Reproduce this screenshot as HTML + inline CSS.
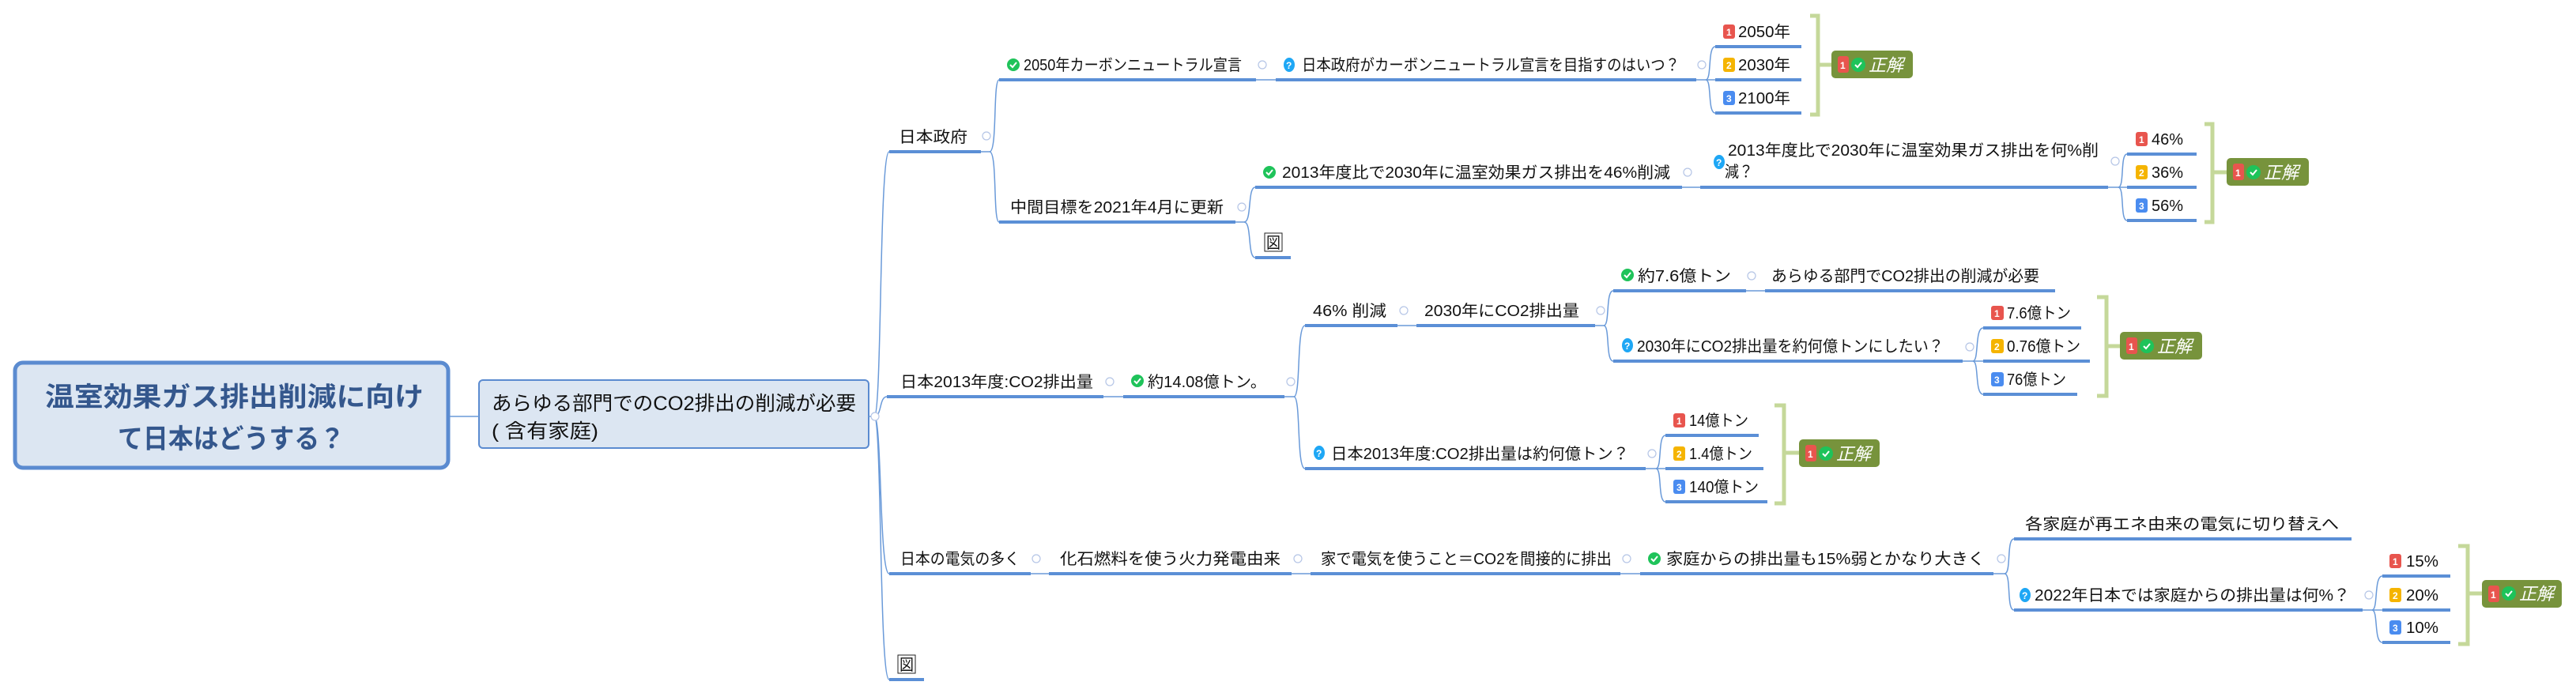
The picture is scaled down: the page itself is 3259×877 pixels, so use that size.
<!DOCTYPE html>
<html><head><meta charset="utf-8"><style>
html,body{margin:0;padding:0;background:#fff;width:3259px;height:877px;overflow:hidden}
svg{display:block}
.t{font-family:"Liberation Sans","Noto Sans CJK JP",sans-serif;font-size:20px;fill:#111}
.b{font-family:"Liberation Sans",sans-serif;font-size:12px;font-weight:bold;fill:#fff}
.u{fill:#5b8fd6}
.l{stroke:#6a9ad9;stroke-width:1.5;fill:none}
.c{fill:#fff;stroke:#b5c5e6;stroke-width:1.2}
.br{stroke:#c5d89a;stroke-width:5;fill:none}
.ok{font-family:"Liberation Sans","Noto Sans CJK JP",sans-serif;font-size:22px;font-style:italic;fill:#fff}
</style></head><body>
<svg width="3259" height="877" viewBox="0 0 3259 877" xmlns="http://www.w3.org/2000/svg">
<!-- root -->
<rect x="19" y="459" width="548" height="133" rx="10" fill="#dce6f2" stroke="#5b8bd0" stroke-width="5"/>
<text x="57" y="514" textLength="479" lengthAdjust="spacingAndGlyphs" style="font-family:'Liberation Sans','Noto Sans CJK JP',sans-serif;font-size:34px;font-weight:bold;fill:#34578d">温室効果ガス排出削減に向け</text>
<text x="149" y="567" textLength="287" lengthAdjust="spacingAndGlyphs" style="font-family:'Liberation Sans','Noto Sans CJK JP',sans-serif;font-size:34px;font-weight:bold;fill:#34578d">て日本はどうする？</text>
<rect x="606" y="481" width="493" height="86" rx="5" fill="#dce6f2" stroke="#5b8bd0" stroke-width="2"/>
<text x="622" y="519" textLength="461" lengthAdjust="spacingAndGlyphs" style="font-family:'Liberation Sans','Noto Sans CJK JP',sans-serif;font-size:25px;fill:#111">あらゆる部門でのCO2排出の削減が必要</text>
<text x="622" y="554" textLength="135" lengthAdjust="spacingAndGlyphs" style="font-family:'Liberation Sans','Noto Sans CJK JP',sans-serif;font-size:25px;fill:#111">( 含有家庭)</text>

<!-- connectors -->
<g class="l">
<path d="M569 527 L606 527"/><path d="M1099 527 L1108 527"/>
<path d="M1106 527 C1116 527,1112 192,1125 192"/>
<path d="M1106 527 C1116 527,1112 502,1122 502"/>
<path d="M1106 527 C1116 527,1112 726,1125 726"/>
<path d="M1106 527 C1116 527,1112 860,1125 860"/>
<path d="M1241 192 L1252 192 C1262 192,1256 101,1264 101"/>
<path d="M1252 192 C1262 192,1256 281,1264 281"/>
<path d="M1589 101 L1614 101"/>
<path d="M2146 101 L2158 101 C2166 101,2160 59,2170 59"/><path d="M2158 101 L2170 101"/><path d="M2158 101 C2166 101,2160 143,2170 143"/>
<path d="M1563 281 L1574 281 C1584 281,1578 237,1588 237"/><path d="M1574 281 C1584 281,1578 326,1588 326"/>
<path d="M2128 237 L2151 237"/>
<path d="M2667 237 L2680 237 C2688 237,2682 195,2691 195"/><path d="M2680 237 L2691 237"/><path d="M2680 237 C2688 237,2682 279,2691 279"/>
<path d="M1396 502 L1421 502"/>
<path d="M1625 502 L1637 502 C1646 502,1640 412,1651 412"/><path d="M1637 502 C1646 502,1640 593,1651 593"/>
<path d="M1768 412 L1792 412"/>
<path d="M2018 412 L2029 412 C2037 412,2031 368,2041 368"/><path d="M2029 412 C2037 412,2031 457,2041 457"/>
<path d="M2209 368 L2233 368"/>
<path d="M2483 457 L2496 457 C2504 457,2498 415,2509 415"/><path d="M2496 457 L2509 457"/><path d="M2496 457 C2504 457,2498 499,2509 499"/>
<path d="M2082 593 L2095 593 C2103 593,2097 551,2107 551"/><path d="M2095 593 L2107 593"/><path d="M2095 593 C2103 593,2097 635,2107 635"/>
<path d="M1304 726 L1327 726"/><path d="M1634 726 L1658 726"/><path d="M2050 726 L2075 726"/>
<path d="M2522 726 L2536 726 C2545 726,2538 682,2548 682"/><path d="M2536 726 C2545 726,2538 772,2548 772"/>
<path d="M2989 772 L3001 772 C3009 772,3003 729,3014 729"/><path d="M3001 772 L3014 772"/><path d="M3001 772 C3009 772,3003 813,3014 813"/>
</g>

<!-- underlines -->
<g class="u">
<rect x="1125" y="190" width="116" height="4"/>
<rect x="1264" y="99" width="325" height="4"/>
<rect x="1614" y="99" width="532" height="4"/>
<rect x="2170" y="57" width="109" height="4"/><rect x="2170" y="99" width="109" height="4"/><rect x="2170" y="141" width="109" height="4"/>
<rect x="1264" y="279" width="299" height="4"/>
<rect x="1588" y="235" width="540" height="4"/>
<rect x="2151" y="235" width="516" height="4"/>
<rect x="2691" y="193" width="88" height="4"/><rect x="2691" y="235" width="88" height="4"/><rect x="2691" y="277" width="88" height="4"/>
<rect x="1588" y="324" width="45" height="4"/>
<rect x="1122" y="500" width="274" height="4"/>
<rect x="1421" y="500" width="204" height="4"/>
<rect x="1651" y="410" width="117" height="4"/>
<rect x="1792" y="410" width="226" height="4"/>
<rect x="2041" y="366" width="168" height="4"/>
<rect x="2233" y="366" width="367" height="4"/>
<rect x="2041" y="455" width="442" height="4"/>
<rect x="2509" y="413" width="124" height="4"/><rect x="2509" y="455" width="135" height="4"/><rect x="2509" y="497" width="119" height="4"/>
<rect x="1651" y="591" width="431" height="4"/>
<rect x="2107" y="549" width="118" height="4"/><rect x="2107" y="591" width="124" height="4"/><rect x="2107" y="633" width="129" height="4"/>
<rect x="1125" y="724" width="179" height="4"/>
<rect x="1327" y="724" width="307" height="4"/>
<rect x="1658" y="724" width="392" height="4"/>
<rect x="2075" y="724" width="447" height="4"/>
<rect x="2548" y="680" width="427" height="4"/>
<rect x="2548" y="770" width="441" height="4"/>
<rect x="3014" y="727" width="86" height="4"/><rect x="3014" y="770" width="86" height="4"/><rect x="3014" y="811" width="86" height="4"/>
<rect x="1125" y="858" width="44" height="4"/>
</g>

<!-- collapse circles -->
<g>
<circle class="c" cx="1107" cy="527" r="5"/><circle class="c" cx="1248" cy="172" r="5"/><circle class="c" cx="1597" cy="82" r="5"/>
<circle class="c" cx="2153" cy="82" r="5"/><circle class="c" cx="1571" cy="262" r="5"/><circle class="c" cx="2135" cy="218" r="5"/>
<circle class="c" cx="2676" cy="204" r="5"/><circle class="c" cx="1404" cy="483" r="5"/><circle class="c" cx="1633" cy="483" r="5"/>
<circle class="c" cx="1776" cy="393" r="5"/><circle class="c" cx="2025" cy="393" r="5"/><circle class="c" cx="2216" cy="349" r="5"/>
<circle class="c" cx="2492" cy="439" r="5"/><circle class="c" cx="2090" cy="574" r="5"/><circle class="c" cx="1311" cy="707" r="5"/>
<circle class="c" cx="1642" cy="707" r="5"/><circle class="c" cx="2058" cy="707" r="5"/><circle class="c" cx="2532" cy="707" r="5"/>
<circle class="c" cx="2997" cy="753" r="5"/>
</g>

<!-- check icons -->
<g>
<circle cx="1282" cy="82" r="8" fill="#1fc35a"/><path d="M1278 82 l3 3 l5 -6" stroke="#fff" stroke-width="2" fill="none"/>
<circle cx="1606" cy="218" r="8" fill="#1fc35a"/><path d="M1602 218 l3 3 l5 -6" stroke="#fff" stroke-width="2" fill="none"/>
<circle cx="1439" cy="482" r="8" fill="#1fc35a"/><path d="M1435 482 l3 3 l5 -6" stroke="#fff" stroke-width="2" fill="none"/>
<circle cx="2059" cy="348" r="8" fill="#1fc35a"/><path d="M2055 348 l3 3 l5 -6" stroke="#fff" stroke-width="2" fill="none"/>
<circle cx="2093" cy="707" r="8" fill="#1fc35a"/><path d="M2089 707 l3 3 l5 -6" stroke="#fff" stroke-width="2" fill="none"/>
</g>
<!-- question icons -->
<g>
<ellipse cx="1631" cy="82" rx="7" ry="9" fill="#1ea7f5"/><text class="b" x="1627" y="87">?</text>
<ellipse cx="2175" cy="205" rx="7" ry="9" fill="#1ea7f5"/><text class="b" x="2171" y="210">?</text>
<ellipse cx="2059" cy="437" rx="7" ry="9" fill="#1ea7f5"/><text class="b" x="2055" y="442">?</text>
<ellipse cx="1669" cy="573" rx="7" ry="9" fill="#1ea7f5"/><text class="b" x="1665" y="578">?</text>
<ellipse cx="2562" cy="753" rx="7" ry="9" fill="#1ea7f5"/><text class="b" x="2558" y="758">?</text>
</g>

<!-- badges -->
<g>
<rect x="2180" y="31" width="15" height="18" rx="3" fill="#e8554e"/><text class="b" x="2184" y="45">1</text>
<rect x="2180" y="73" width="15" height="18" rx="3" fill="#f5b400"/><text class="b" x="2184" y="87">2</text>
<rect x="2180" y="115" width="15" height="18" rx="3" fill="#4a8cf0"/><text class="b" x="2184" y="129">3</text>
<rect x="2702" y="167" width="15" height="18" rx="3" fill="#e8554e"/><text class="b" x="2706" y="181">1</text>
<rect x="2702" y="209" width="15" height="18" rx="3" fill="#f5b400"/><text class="b" x="2706" y="223">2</text>
<rect x="2702" y="251" width="15" height="18" rx="3" fill="#4a8cf0"/><text class="b" x="2706" y="265">3</text>
<rect x="2519" y="387" width="16" height="18" rx="3" fill="#e8554e"/><text class="b" x="2523" y="401">1</text>
<rect x="2519" y="429" width="16" height="18" rx="3" fill="#f5b400"/><text class="b" x="2523" y="443">2</text>
<rect x="2519" y="471" width="16" height="18" rx="3" fill="#4a8cf0"/><text class="b" x="2523" y="485">3</text>
<rect x="2117" y="523" width="15" height="18" rx="3" fill="#e8554e"/><text class="b" x="2121" y="537">1</text>
<rect x="2117" y="565" width="15" height="18" rx="3" fill="#f5b400"/><text class="b" x="2121" y="579">2</text>
<rect x="2117" y="607" width="15" height="18" rx="3" fill="#4a8cf0"/><text class="b" x="2121" y="621">3</text>
<rect x="3023" y="701" width="15" height="18" rx="3" fill="#e8554e"/><text class="b" x="3027" y="715">1</text>
<rect x="3023" y="744" width="15" height="18" rx="3" fill="#f5b400"/><text class="b" x="3027" y="758">2</text>
<rect x="3023" y="785" width="15" height="18" rx="3" fill="#4a8cf0"/><text class="b" x="3027" y="799">3</text>
</g>

<!-- brackets + 正解 -->
<g>
<path class="br" d="M2290 20 L2300 20 L2300 145 L2290 145 M2300 82 L2317 82"/>
<rect x="2317" y="64" width="103" height="35" rx="5" fill="#77933c"/>
<rect x="2325" y="71" width="14" height="21" rx="3" fill="#e8554e"/><text class="b" x="2328" y="87">1</text>
<circle cx="2351" cy="82" r="9" fill="#1ec35a"/><path d="M2347 82 l3 3 l5 -6" stroke="#fff" stroke-width="2" fill="none"/>
<text class="ok" x="2364" y="90">正解</text>

<path class="br" d="M2789 157 L2799 157 L2799 281 L2789 281 M2799 218 L2817 218"/>
<rect x="2817" y="200" width="104" height="35" rx="5" fill="#77933c"/>
<rect x="2825" y="207" width="14" height="21" rx="3" fill="#e8554e"/><text class="b" x="2828" y="223">1</text>
<circle cx="2851" cy="218" r="9" fill="#1ec35a"/><path d="M2847 218 l3 3 l5 -6" stroke="#fff" stroke-width="2" fill="none"/>
<text class="ok" x="2864" y="226">正解</text>

<path class="br" d="M2653 376 L2665 376 L2665 501 L2653 501 M2665 438 L2682 438"/>
<rect x="2682" y="420" width="104" height="35" rx="5" fill="#77933c"/>
<rect x="2690" y="427" width="14" height="21" rx="3" fill="#e8554e"/><text class="b" x="2693" y="443">1</text>
<circle cx="2716" cy="438" r="9" fill="#1ec35a"/><path d="M2712 438 l3 3 l5 -6" stroke="#fff" stroke-width="2" fill="none"/>
<text class="ok" x="2729" y="446">正解</text>

<path class="br" d="M2245 513 L2257 513 L2257 637 L2245 637 M2257 573 L2276 573"/>
<rect x="2276" y="556" width="102" height="35" rx="5" fill="#77933c"/>
<rect x="2284" y="563" width="14" height="21" rx="3" fill="#e8554e"/><text class="b" x="2287" y="579">1</text>
<circle cx="2310" cy="574" r="9" fill="#1ec35a"/><path d="M2306 574 l3 3 l5 -6" stroke="#fff" stroke-width="2" fill="none"/>
<text class="ok" x="2323" y="582">正解</text>

<path class="br" d="M3110 691 L3122 691 L3122 815 L3110 815 M3122 751 L3140 751"/>
<rect x="3140" y="734" width="101" height="35" rx="5" fill="#77933c"/>
<rect x="3148" y="741" width="14" height="21" rx="3" fill="#e8554e"/><text class="b" x="3151" y="757">1</text>
<circle cx="3174" cy="751" r="9" fill="#1ec35a"/><path d="M3170 751 l3 3 l5 -6" stroke="#fff" stroke-width="2" fill="none"/>
<text class="ok" x="3187" y="759">正解</text>
</g>

<!-- texts -->
<g class="t">
<text x="1137" y="180" textLength="87" lengthAdjust="spacingAndGlyphs">日本政府</text>
<text x="1295" y="89" textLength="276" lengthAdjust="spacingAndGlyphs">2050年カーボンニュートラル宣言</text>
<text x="1647" y="89" textLength="478" lengthAdjust="spacingAndGlyphs">日本政府がカーボンニュートラル宣言を目指すのはいつ？</text>
<text x="2199" y="47" textLength="66" lengthAdjust="spacingAndGlyphs">2050年</text>
<text x="2199" y="89" textLength="66" lengthAdjust="spacingAndGlyphs">2030年</text>
<text x="2199" y="131" textLength="66" lengthAdjust="spacingAndGlyphs">2100年</text>
<text x="1278" y="269" textLength="270" lengthAdjust="spacingAndGlyphs">中間目標を2021年4月に更新</text>
<text x="1622" y="225" textLength="491" lengthAdjust="spacingAndGlyphs">2013年度比で2030年に温室効果ガス排出を46%削減</text>
<text x="2186" y="197" textLength="469" lengthAdjust="spacingAndGlyphs">2013年度比で2030年に温室効果ガス排出を何%削</text>
<text x="2182" y="224" textLength="36" lengthAdjust="spacingAndGlyphs">減？</text>
<text x="2722" y="183" textLength="40" lengthAdjust="spacingAndGlyphs">46%</text>
<text x="2722" y="225" textLength="40" lengthAdjust="spacingAndGlyphs">36%</text>
<text x="2722" y="267" textLength="40" lengthAdjust="spacingAndGlyphs">56%</text>
<text x="1602" y="314" textLength="18" lengthAdjust="spacingAndGlyphs">図</text>
<text x="1139" y="490" textLength="244" lengthAdjust="spacingAndGlyphs">日本2013年度:CO2排出量</text>
<text x="1452" y="490" textLength="150" lengthAdjust="spacingAndGlyphs">約14.08億トン。</text>
<text x="1661" y="400" textLength="93" lengthAdjust="spacingAndGlyphs">46% 削減</text>
<text x="1802" y="400" textLength="196" lengthAdjust="spacingAndGlyphs">2030年にCO2排出量</text>
<text x="2072" y="356" textLength="118" lengthAdjust="spacingAndGlyphs">約7.6億トン</text>
<text x="2241" y="356" textLength="339" lengthAdjust="spacingAndGlyphs">あらゆる部門でCO2排出の削減が必要</text>
<text x="2071" y="445" textLength="388" lengthAdjust="spacingAndGlyphs">2030年にCO2排出量を約何億トンにしたい？</text>
<text x="2539" y="403" textLength="81" lengthAdjust="spacingAndGlyphs">7.6億トン</text>
<text x="2539" y="445" textLength="93" lengthAdjust="spacingAndGlyphs">0.76億トン</text>
<text x="2539" y="487" textLength="75" lengthAdjust="spacingAndGlyphs">76億トン</text>
<text x="1684" y="581" textLength="377" lengthAdjust="spacingAndGlyphs">日本2013年度:CO2排出量は約何億トン？</text>
<text x="2137" y="539" textLength="75" lengthAdjust="spacingAndGlyphs">14億トン</text>
<text x="2137" y="581" textLength="80" lengthAdjust="spacingAndGlyphs">1.4億トン</text>
<text x="2137" y="623" textLength="88" lengthAdjust="spacingAndGlyphs">140億トン</text>
<text x="1139" y="714" textLength="151" lengthAdjust="spacingAndGlyphs">日本の電気の多く</text>
<text x="1341" y="714" textLength="279" lengthAdjust="spacingAndGlyphs">化石燃料を使う火力発電由来</text>
<text x="1671" y="714" textLength="368" lengthAdjust="spacingAndGlyphs">家で電気を使うこと＝CO2を間接的に排出</text>
<text x="2108" y="714" textLength="403" lengthAdjust="spacingAndGlyphs">家庭からの排出量も15%弱とかなり大きく</text>
<text x="2562" y="670" textLength="397" lengthAdjust="spacingAndGlyphs">各家庭が再エネ由来の電気に切り替えへ</text>
<text x="2574" y="760" textLength="399" lengthAdjust="spacingAndGlyphs">2022年日本では家庭からの排出量は何%？</text>
<text x="3044" y="717" textLength="41" lengthAdjust="spacingAndGlyphs">15%</text>
<text x="3044" y="760" textLength="41" lengthAdjust="spacingAndGlyphs">20%</text>
<text x="3044" y="801" textLength="41" lengthAdjust="spacingAndGlyphs">10%</text>
<text x="1138" y="848" textLength="18" lengthAdjust="spacingAndGlyphs">図</text>
</g>
<rect x="1600" y="295" width="22" height="23" fill="none" stroke="#222" stroke-width="1"/>
<rect x="1136" y="829" width="22" height="23" fill="none" stroke="#222" stroke-width="1"/>
</svg>
</body></html>
